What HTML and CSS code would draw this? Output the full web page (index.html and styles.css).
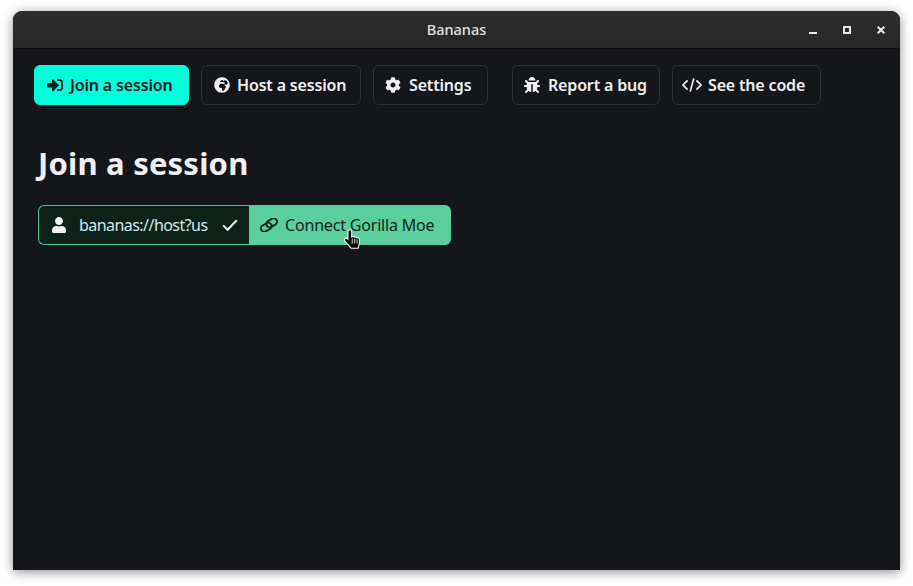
FILE: index.html
```html
<!DOCTYPE html>
<html lang="en">
<head>
<meta charset="utf-8">
<title>Bananas</title>
<link rel="stylesheet" href="styles.css">
</head>
<body>
<div class="window">
  <header class="titlebar">
    <span class="title">Bananas</span>
    <div class="controls">
      <span class="ctl"><svg viewBox="0 0 8 8" width="8" height="8"><rect x="0" y="6" width="8" height="2" fill="#e8e8e8"/></svg></span>
      <span class="ctl"><svg viewBox="0 0 8 8" width="8" height="8"><rect x="1" y="1" width="6" height="6" fill="none" stroke="#e8e8e8" stroke-width="2"/></svg></span>
      <span class="ctl"><svg viewBox="0 0 8 8" width="8" height="8"><path d="M.7.7l6.6 6.6M7.3.7L.7 7.3" stroke="#e8e8e8" stroke-width="2" fill="none"/></svg></span>
    </div>
  </header>
  <nav class="nav">
    <a class="btn primary w-join"><svg class="ic" viewBox="0 0 512 512"><path d="M416 448h-84c-6.6 0-12-5.4-12-12v-40c0-6.6 5.4-12 12-12h84c17.7 0 32-14.3 32-32V160c0-17.7-14.3-32-32-32h-84c-6.6 0-12-5.4-12-12V76c0-6.6 5.4-12 12-12h84c53 0 96 43 96 96v192c0 53-43 96-96 96zm-47-201L201 79c-15-15-41-4.5-41 17v96H24c-13.3 0-24 10.7-24 24v96c0 13.3 10.7 24 24 24h136v96c0 21.5 26 32 41 17l168-168c9.3-9.4 9.3-24.6 0-34z"/></svg><span>Join a session</span></a>
    <a class="btn w-host"><svg class="ic" viewBox="0 0 496 512"><path d="M248 8C111.03 8 0 119.03 0 256s111.03 248 248 248 248-111.03 248-248S384.97 8 248 8zm160 215.5v6.93c0 5.87-3.32 11.24-8.57 13.86l-15.39 7.7a15.485 15.485 0 0 1-15.53-.97l-18.21-12.14a15.52 15.52 0 0 0-13.5-1.81l-2.65.88c-9.7 3.23-13.66 14.79-7.99 23.3l13.24 19.86c2.87 4.31 7.71 6.9 12.89 6.9h8.21c8.56 0 15.5 6.94 15.5 15.5v11.34c0 3.35-1.09 6.62-3.1 9.3l-18.74 24.98c-1.42 1.9-2.39 4.1-2.83 6.43l-4.3 22.83c-.62 3.29-2.29 6.29-4.76 8.56a159.608 159.608 0 0 0-25.76 29.4l-13.03 19.54a27.756 27.756 0 0 1-23.09 12.36c-10.51 0-20.12-5.94-24.82-15.34a78.902 78.902 0 0 1-8.33-35.29V367.5c0-8.56-6.94-15.5-15.5-15.5h-25.88c-14.49 0-28.38-5.76-38.63-16a54.659 54.659 0 0 1-16-38.63v-14.06c0-17.19 8.1-33.38 21.85-43.7l27.58-20.69a54.663 54.663 0 0 1 32.78-10.93h.89c8.48 0 16.85 1.97 24.43 5.77l14.72 7.36c3.68 1.84 7.93 2.14 11.83.84l47.31-15.77c6.33-2.11 10.6-8.03 10.6-14.7 0-8.56-6.94-15.5-15.5-15.5h-10.09c-4.11 0-8.05-1.63-10.96-4.54l-6.92-6.92a15.487 15.487 0 0 0-10.96-4.54H199.5c-8.56 0-15.5-6.94-15.5-15.5v-4.4c0-7.11 4.84-13.31 11.74-15.04l14.45-3.61c3.74-.94 7-3.23 9.14-6.44l8.08-12.11c2.87-4.31 7.71-6.9 12.89-6.9h24.21c8.56 0 15.5 6.94 15.5 15.5v21.7C359.23 71.63 422.86 131.02 441.93 208H423.5c-8.56 0-15.5 6.94-15.5 15.5z"/></svg><span>Host a session</span></a>
    <a class="btn w-settings"><svg class="ic" viewBox="0 0 512 512"><path d="M487.4 315.7l-42.6-24.6c4.3-23.2 4.3-47 0-70.2l42.6-24.6c4.9-2.8 7.1-8.6 5.5-14-11.1-35.6-30-67.8-54.7-94.6-3.8-4.1-10-5.1-14.8-2.3L380.8 110c-17.9-15.4-38.5-27.3-60.8-35.1V25.8c0-5.6-3.9-10.5-9.4-11.7-36.7-8.2-74.3-7.8-109.2 0-5.5 1.2-9.4 6.1-9.4 11.7V75c-22.2 7.9-42.8 19.8-60.8 35.1L88.7 85.5c-4.9-2.8-11-1.9-14.8 2.3-24.7 26.7-43.6 58.9-54.7 94.6-1.7 5.4.6 11.2 5.5 14L67.3 221c-4.3 23.2-4.3 47 0 70.2l-42.6 24.6c-4.9 2.8-7.1 8.6-5.5 14 11.1 35.6 30 67.8 54.7 94.6 3.8 4.1 10 5.1 14.8 2.3l42.6-24.6c17.9 15.4 38.5 27.3 60.8 35.1v49.2c0 5.6 3.9 10.5 9.4 11.7 36.7 8.2 74.3 7.8 109.2 0 5.5-1.2 9.4-6.1 9.4-11.7v-49.2c22.2-7.9 42.8-19.8 60.8-35.1l42.6 24.6c4.9 2.8 11 1.9 14.8-2.3 24.7-26.7 43.6-58.9 54.7-94.6 1.5-5.5-.7-11.3-5.6-14.1zM256 336c-44.1 0-80-35.9-80-80s35.9-80 80-80 80 35.9 80 80-35.9 80-80 80z"/></svg><span>Settings</span></a>
    <a class="btn w-bug push"><svg class="ic" viewBox="0 0 512 512"><path d="M511.988 288.9c-.478 17.43-15.217 31.1-32.653 31.1H424v16c0 21.864-4.882 42.584-13.6 61.145l60.228 60.228c12.496 12.497 12.496 32.758 0 45.255-12.498 12.497-32.759 12.496-45.256 0l-54.736-54.736C345.886 467.965 314.351 480 280 480V236c0-6.627-5.373-12-12-12h-24c-6.627 0-12 5.373-12 12v244c-34.351 0-65.886-12.035-90.636-32.108l-54.736 54.736c-12.498 12.497-32.759 12.496-45.256 0-12.496-12.497-12.496-32.758 0-45.255l60.228-60.228C92.882 378.584 88 357.864 88 336v-16H32.666C15.23 320 .491 306.33.013 288.9-.484 270.816 14.028 256 32 256h56v-58.745l-46.628-46.628c-12.496-12.497-12.496-32.758 0-45.255 12.498-12.497 32.758-12.497 45.256 0L141.255 160h229.489l54.627-54.627c12.498-12.497 32.758-12.497 45.256 0 12.496 12.497 12.496 32.758 0 45.255L424 197.255V256h56c17.972 0 32.484 14.816 31.988 32.9zM257 0c-61.856 0-112 50.144-112 112h224C369 50.144 318.856 0 257 0z"/></svg><span>Report a bug</span></a>
    <a class="btn w-code"><svg class="ic wide" viewBox="0 0 20 16"><path d="M5.6 3.4L1 8l4.6 4.6M14.4 3.4L19 8l-4.6 4.6M11.8 1.4L8.2 14.6" fill="none" stroke="currentColor" stroke-width="1.7"/></svg><span>See the code</span></a>
  </nav>
  <main class="main">
    <h1 class="heading">Join a session</h1>
    <div class="group">
      <div class="field">
        <svg class="field-user" viewBox="0 0 448 512"><path d="M224 256c70.7 0 128-57.3 128-128S294.7 0 224 0 96 57.3 96 128s57.3 128 128 128zm89.6 32h-16.7c-22.2 10.2-46.9 16-72.9 16s-50.6-5.8-72.9-16h-16.7C60.2 288 0 348.2 0 422.4V464c0 26.5 21.5 48 48 48h352c26.5 0 48-21.5 48-48v-41.6c0-74.2-60.2-134.4-134.4-134.4z"/></svg>
        <span class="field-text">bananas://host?username=gorilla</span>
        <svg class="field-check" viewBox="0 0 16 14"><path d="M1.2 7.4l4.4 4.4 9.2-9.6" fill="none" stroke="#eef0f2" stroke-width="2"/></svg>
      </div>
      <a class="connect">
        <svg class="connect-ic" viewBox="0 0 18 14"><rect x="0.6" y="5.9" width="11.4" height="6.6" rx="3.3" transform="rotate(-30 6.3 9.2)" fill="none" stroke="currentColor" stroke-width="1.9"/><rect x="6" y="1.5" width="11.4" height="6.6" rx="3.3" transform="rotate(-30 11.7 4.8)" fill="none" stroke="currentColor" stroke-width="1.9"/></svg>
        <span>Connect Gorilla Moe</span>
        <svg class="cursor" viewBox="0 0 18 19"><path d="M6 .8c1 0 1.8.8 1.8 1.8v5l.5-.1c.6-.6 1.8-.5 2.3.2.7-.4 1.8-.2 2.2.6.9-.3 2.2.2 2.4 1.3.3 1.8.1 3.6-.4 5.3l-.9 3.3H7.2L1.2 11.6c-.7-.9-.5-2.1.3-2.6.8-.5 1.8-.3 2.4.4l.3.3V2.6C4.2 1.6 5 .8 6 .8z" fill="#0d0d0d" stroke="#fff" stroke-width="1"/><path d="M8.3 9.4v4.4M10.6 9.4v4.4M12.9 9.8v4" stroke="#fff" stroke-width=".8"/></svg>
      </a>
    </div>
  </main>
</div>
</body>
</html>
```
FILE: styles.css
```css
* { box-sizing: border-box; }
html, body { margin: 0; height: 100%; }
body {
  background: #fff;
  padding: 11px 13px 16px;
  font-family: "Noto Sans", "Open Sans", sans-serif;
  overflow: hidden;
}
.window {
  height: 559px;
  background: #15161a;
  border-radius: 9px 9px 0 0;
  box-shadow: 0 2px 11px rgba(0, 0, 0, .45);
  display: flex;
  flex-direction: column;
  overflow: hidden;
}
.titlebar {
  position: relative;
  flex: none;
  height: 38px;
  padding-bottom: 2px;
  background: linear-gradient(#2d2d2d, #272727);
  border-bottom: 1px solid #0e0e10;
  display: flex;
  align-items: center;
  justify-content: center;
}
.title {
  color: #e2e2e2;
  font-size: 14.5px;
  font-weight: 500;
}
.controls {
  position: absolute;
  right: 15px;
  top: 15px;
  display: flex;
  gap: 26px;
}
.ctl { display: block; width: 8px; height: 8px; line-height: 0; }
.nav {
  display: flex;
  gap: 12px;
  padding: 16px 21px 0;
}
.btn {
  height: 40px;
  display: flex;
  align-items: center;
  gap: 7px;
  padding-left: 12px;
  border: 1px solid #2c2e38;
  border-radius: 6px;
  color: #f0f0f2;
  font-size: 16px;
  font-weight: 600;
  letter-spacing: -.17px;
  white-space: nowrap;
}
.btn.primary { background: #00ffdc; border-color: #00ffdc; color: #10201f; }
.w-join { width: 155px; }
.w-host { width: 160px; }
.w-settings { width: 115px; padding-left: 11px; gap: 8px; }
.w-bug { width: 148px; gap: 8px; padding-left: 11px; }
.w-code { width: 149px; padding-left: 9px; gap: 6px; }
.push { margin-left: 12px; }
.ic { width: 16px; height: 16px; fill: currentColor; flex: none; }
.ic.wide { width: 20px; }
.main { padding: 0 25px; }
.heading {
  margin: 36px 0 0;
  color: #f0f0f4;
  font-size: 31px;
  line-height: 44px;
  font-weight: 700;
  letter-spacing: .2px;
}
.group {
  margin-top: 20px;
  display: flex;
  width: 413px;
  height: 40px;
}
.field {
  width: 211px;
  display: flex;
  align-items: center;
  background: #0c2118;
  border: 1px solid #48c78e;
  border-right: 0;
  border-radius: 6px 0 0 6px;
  padding-left: 13px;
  color: #d5e8f0;
}
.field-user { width: 14px; height: 16px; fill: #eef0f2; flex: none; }
.field-text {
  width: 129px;
  margin-left: 13px;
  overflow: hidden;
  white-space: nowrap;
  font-size: 16px;
  letter-spacing: -.55px;
}
.field-check { width: 16px; height: 14px; flex: none; margin-left: 14px; }
.connect {
  position: relative;
  flex: 1;
  display: flex;
  align-items: center;
  gap: 7px;
  padding-left: 11px;
  background: #58cf9c;
  border-radius: 0 6px 6px 0;
  color: #10261e;
  font-size: 16px;
  letter-spacing: -.18px;
  white-space: nowrap;
}
.connect-ic { width: 18px; height: 14px; flex: none; }
.cursor { position: absolute; left: 94px; top: 24px; width: 20px; height: 20px; }
```
